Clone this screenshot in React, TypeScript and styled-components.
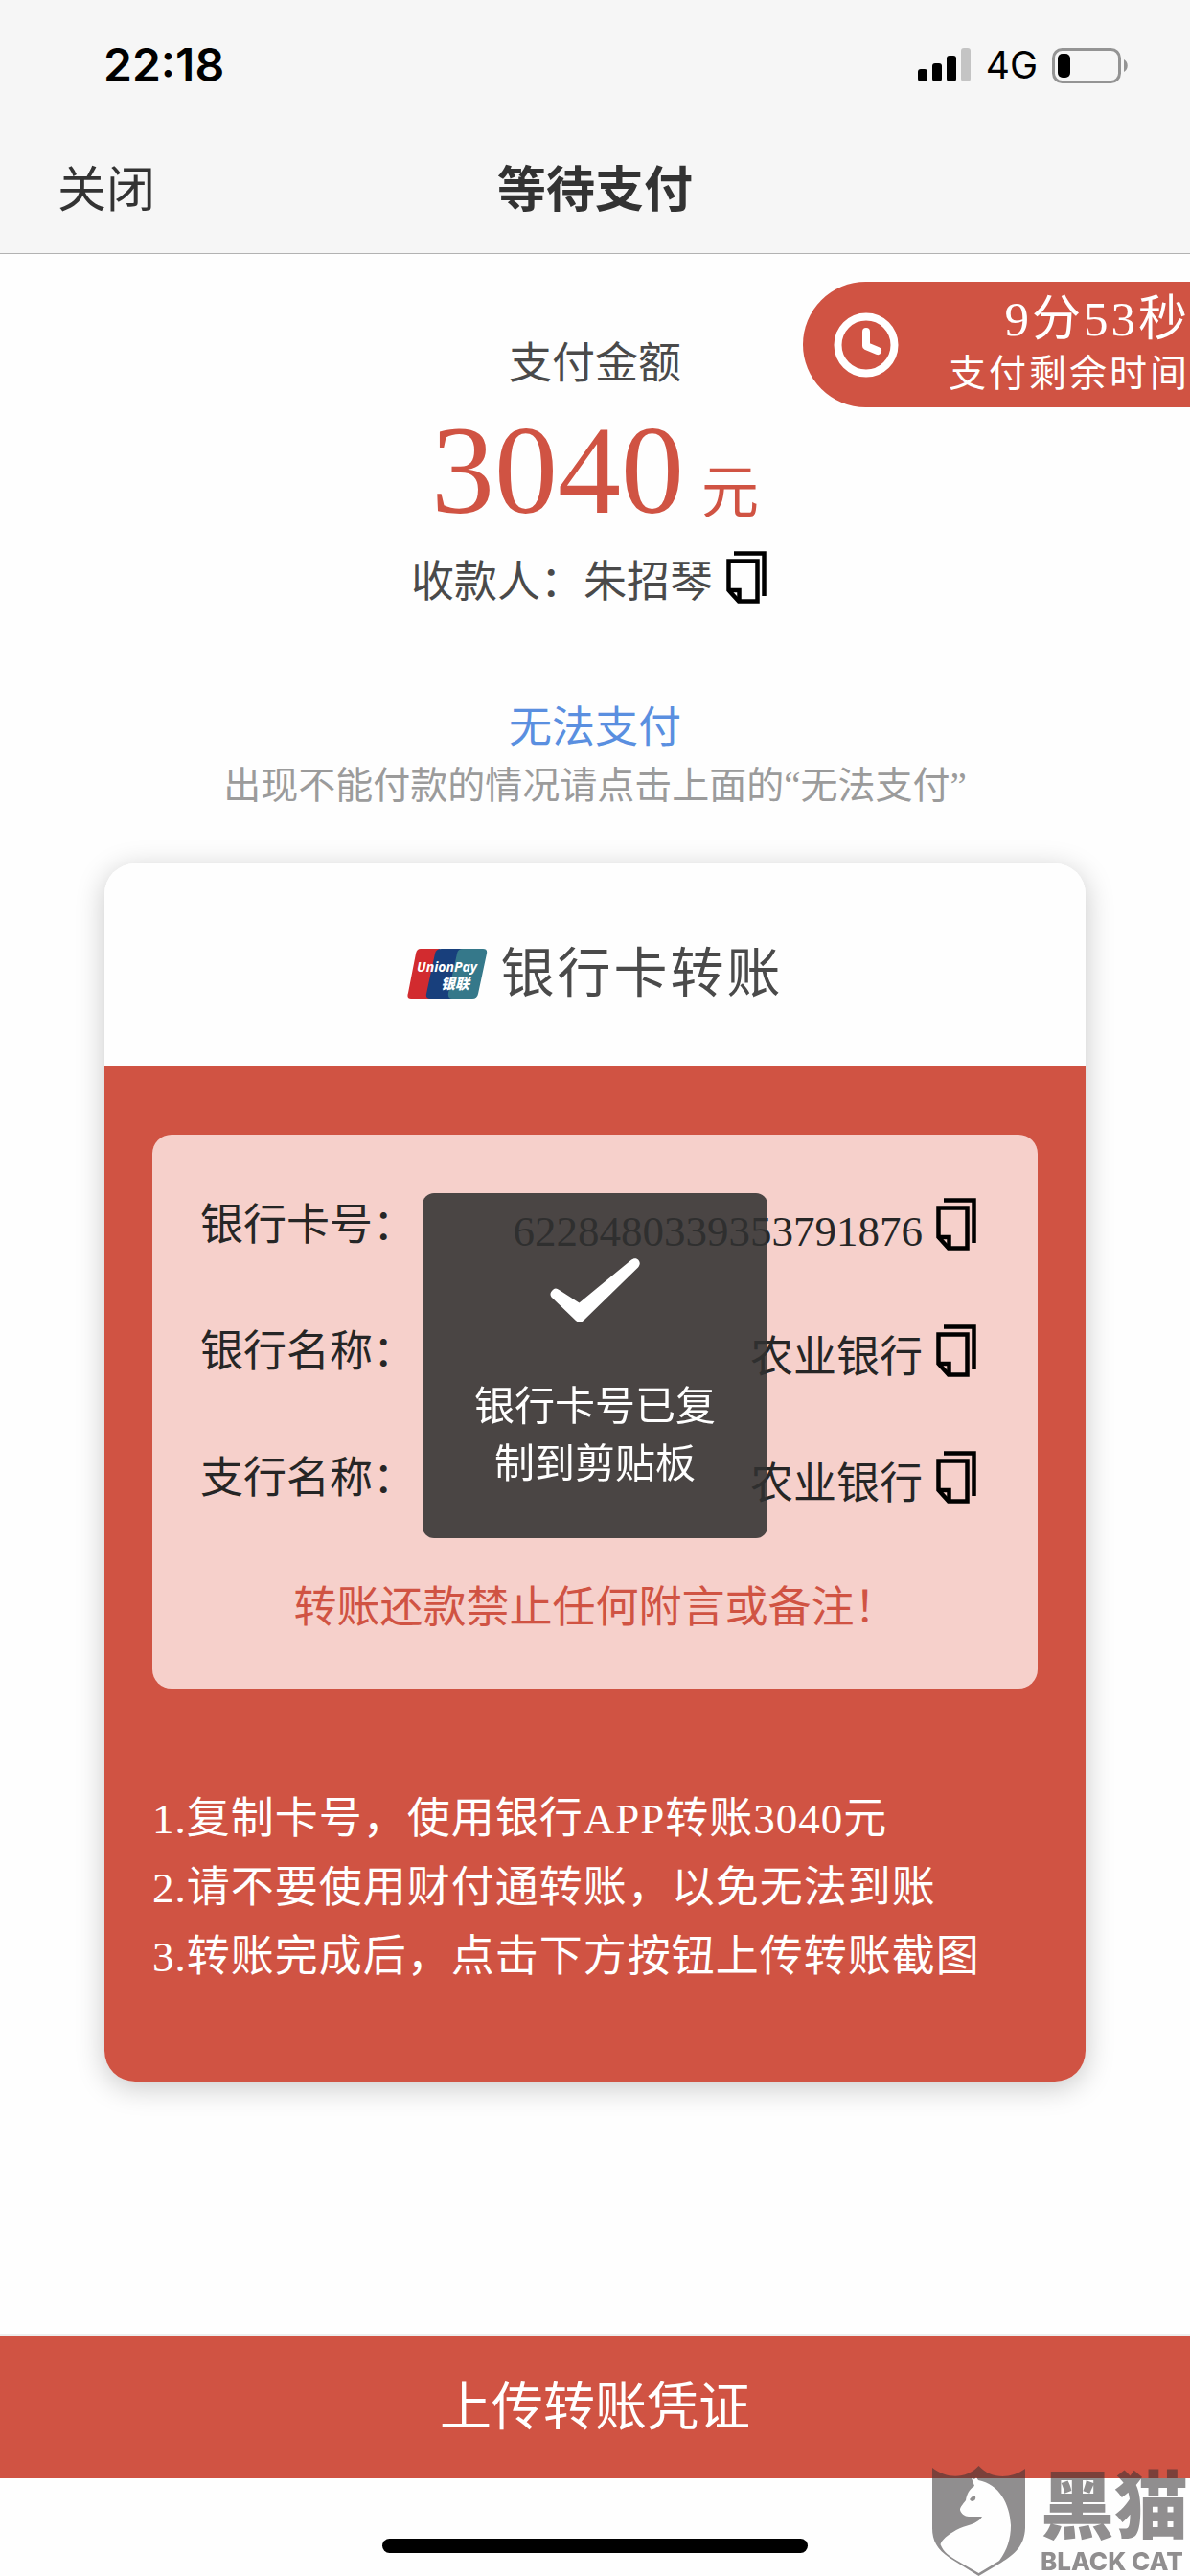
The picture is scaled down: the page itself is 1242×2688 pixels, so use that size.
import React from 'react';
import styled, { createGlobalStyle } from 'styled-components';

const red = '#d05343';
const serif = `'Liberation Serif', 'Noto Sans CJK SC', serif`;
const sans = `Inter, 'Noto Sans CJK SC', sans-serif`;

const GlobalStyle = createGlobalStyle`
  *, *::before, *::after { box-sizing: border-box; }
  body { margin: 0; background: #fefefe; font-family: ${serif}; color: #4a4a4a; }
  button { border: 0; padding: 0; background: none; font: inherit; color: inherit; cursor: pointer; }
  h1, h2, p, ol, dl, dt, dd { margin: 0; padding: 0; font-weight: 400; }
  svg { display: block; flex: none; }
`;

const Page = styled.div`
  display: flex;
  flex-direction: column;
  min-height: 100vh;
`;

const Header = styled.header`
  background: #f6f6f6;
  border-bottom: 1px solid #b2b2b2;
  font-family: ${sans};
`;

const StatusBar = styled.div`
  display: flex;
  align-items: center;
  justify-content: space-between;
  height: 132px;
  padding: 4px 64px 0 108px;
  color: #000;
`;

const Clock = styled.time`
  font-size: 48px;
  font-weight: 600;
  line-height: 60px;
`;

const StatusIcons = styled.div`
  display: flex;
  align-items: center;
  gap: 15px;
`;

const Network = styled.span`
  font-size: 39px;
  line-height: 48px;
`;

const NavBar = styled.nav`
  display: grid;
  grid-template-columns: 1fr auto 1fr;
  align-items: center;
  height: 132px;
  padding: 0 60px;
  color: #333;
  font-size: 51px;
  line-height: 72px;
`;

const CloseButton = styled.button`
  justify-self: start;
`;

const Title = styled.h1`
  font-size: 51px;
  && { font-weight: 700; }
`;

const Main = styled.main`
  position: relative;
  flex: 1;
  display: flex;
  flex-direction: column;
  align-items: center;
  padding-top: 82px;
`;

const Countdown = styled.div`
  position: absolute;
  top: 29px;
  right: 0;
  display: flex;
  align-items: center;
  justify-content: space-between;
  width: 404px;
  height: 131px;
  padding-left: 32px;
  border-radius: 66px 0 0 66px;
  background: ${red};
  color: #fff;
  text-align: right;
  letter-spacing: 3px;
`;

const TimeLeft = styled.p`
  font-size: 51px;
  line-height: 60px;
`;

const TimeLabel = styled.p`
  font-size: 39px;
  line-height: 54px;
`;

const Caption = styled.p`
  font-size: 45px;
  line-height: 66px;
`;

const Payee = styled.div`
  display: flex;
  align-items: center;
  gap: 14px;
  height: 66px;
  padding-right: 12px;
`;

const PayeeName = styled.p`
  && { padding-top: 12px; }
  font-size: 45px;
  line-height: 54px;
`;

const Amount = styled.p`
  display: flex;
  align-items: baseline;
  gap: 18px;
  color: ${red};
  font-size: 132px;
  line-height: 156px;
`;

const Unit = styled.span`
  font-size: 60px;
  line-height: 72px;
`;

const CannotPay = styled.button`
  && { color: #5a8fe0; font-size: 45px; line-height: 66px; }
  margin-top: 92px;
`;

const Tip = styled.p`
  color: #9b9b9b;
  font-size: 39px;
  line-height: 54px;
`;

const Card = styled.section`
  align-self: stretch;
  margin: 54px 109px 96px;
  border-radius: 32px;
  overflow: hidden;
  box-shadow: 0 6px 30px rgba(0, 0, 0, 0.22);
`;

const CardHeader = styled.div`
  display: flex;
  align-items: center;
  justify-content: center;
  gap: 14px;
  height: 211px;
  padding-top: 18px;
  background: #fefefe;
`;

const CardTitle = styled.h2`
  font-size: 56px;
  line-height: 72px;
  letter-spacing: 3px;
`;

const CardBody = styled.div`
  padding: 72px 50px 94px;
  background: ${red};
`;

const Panel = styled.div`
  padding: 60px 63px 51px 50px;
  border-radius: 20px;
  background: #f6d0cb;
  color: #262626;
  font-size: 45px;
  line-height: 66px;
`;

const Details = styled.dl`
  display: flex;
  flex-direction: column;
  gap: 66px;
`;

const Row = styled.div`
  display: flex;
  align-items: center;
  justify-content: space-between;
  height: 66px;
`;

const Label = styled.dt`
  && { padding-top: 4px; }
`;

const Value = styled.dd`
  display: flex;
  align-items: center;
  gap: 14px;
`;

const ValueText = styled.span`
  padding-top: 16px;
`;

const Warning = styled.p`
  && { margin-top: 71px; }
  color: ${red};
  text-align: center;
  text-indent: 14px;
`;

const Steps = styled.ol`
  && { margin-top: 100px; }
  list-style: none;
  color: #fff;
  font-size: 45px;
  line-height: 72px;
  letter-spacing: 1px;
`;

const Footer = styled.footer`
  display: flex;
  flex-direction: column;
  align-items: center;
`;

const UploadButton = styled.button`
  && {
    width: 100%;
    height: 151px;
    padding-top: 2px;
    border-top: 3px solid #eee;
    background: ${red};
    color: #fff;
    font-size: 54px;
    line-height: 72px;
  }
`;

const HomeIndicator = styled.div`
  width: 444px;
  height: 15px;
  margin: 63px 0 24px;
  border-radius: 8px;
  background: #000;
`;

const Toast = styled.div`
  position: fixed;
  top: 1245px;
  left: 50%;
  display: flex;
  flex-direction: column;
  align-items: center;
  width: 360px;
  height: 360px;
  margin-left: -180px;
  padding: 68px 48px 0;
  border-radius: 12px;
  background: rgba(48, 48, 48, 0.87);
  color: #fff;
  font-size: 42px;
  line-height: 60px;
  text-align: center;
`;

const ToastText = styled.p`
  && { margin-top: 57px; }
`;

const Watermark = styled.div`
  position: fixed;
  right: 0;
  bottom: 0;
  display: flex;
  gap: 16px;
  height: 115px;
  opacity: 0.55;
  color: #353234;
  pointer-events: none;
`;

const WatermarkText = styled.div`
  display: flex;
  flex-direction: column;
  justify-content: flex-end;
  gap: 12px;
  width: 156px;
  padding-bottom: 2px;
`;

const WatermarkName = styled.span`
  font-family: 'Noto Sans CJK SC', sans-serif;
  font-size: 77px;
  font-weight: 900;
  line-height: 76px;
`;

const WatermarkLatin = styled.span`
  font-family: Inter, sans-serif;
  font-size: 26px;
  font-weight: 800;
  line-height: 26px;
  white-space: nowrap;
`;

const SignalIcon = () => (
  <svg width="56" height="36" viewBox="0 0 56 36" aria-hidden="true">
    <rect x="0" y="22" width="10" height="13" rx="3" />
    <rect x="15" y="16" width="10" height="19" rx="3" />
    <rect x="30" y="8" width="10" height="27" rx="3" />
    <rect x="45" y="0" width="10" height="35" rx="3" fill="#c4c4c4" />
  </svg>
);

const BatteryIcon = () => (
  <svg width="80" height="37" viewBox="0 0 80 37" aria-hidden="true">
    <rect x="1.5" y="1.5" width="69" height="34" rx="9" fill="none" stroke="#949494" strokeWidth="3" />
    <rect x="6" y="6" width="13" height="25" rx="5" />
    <path d="M75 12c5 2.500 5 10.500 0 13z" fill="#949494" />
  </svg>
);

const ClockIcon = () => (
  <svg width="68" height="68" viewBox="0 0 68 68" fill="none" stroke="#fff" strokeWidth="8" strokeLinecap="round" strokeLinejoin="round" aria-hidden="true">
    <circle cx="34" cy="34" r="29.500" />
    <path d="M34 20v15l12 5" />
  </svg>
);

const CopyIcon = () => (
  <svg width="43" height="55" viewBox="0 0 43 55" fill="none" stroke="#000" strokeWidth="4.5" aria-hidden="true">
    <path d="M8 2.500h31.500V47" />
    <path d="M2.500 10.500H32.500V52.500H13L2.500 41z" />
    <path d="M2.500 41h11v11.500" />
  </svg>
);

const CheckIcon = () => (
  <svg width="94" height="68" viewBox="0 0 94 68" fill="#fff" aria-hidden="true">
    <path d="M1.500 40.500C-.5 37.500.5 35 3.500 32.500C5.500 31 7.500 31.500 9.500 33L30.500 46.500L84.500 2C87.500-.5 90.500-.5 92.500 2C94.500 4.500 94 7 92 9.500L35 65Q31 69 27 65z" />
  </svg>
);

const UnionPayLogo = () => (
  <svg width="84" height="52" viewBox="0 0 84 52" role="img" aria-label="UnionPay">
    <path d="M14 0H34L24 52H4Q-1 52 1 46L9 5Q10 0 14 0z" fill="#d22b2f" />
    <path d="M36 0H60L48 52H24Q19 52 20 47L29 5Q30 0 36 0z" fill="#183f7c" />
    <path d="M58 0H79Q84 0 83 5L74 47Q73 52 68 52H47Q42 52 43 46L52 5Q53 0 58 0z" fill="#35788a" />
    <text x="10" y="24" fill="#fff" fontFamily="Open Sans, sans-serif" fontSize="14" fontWeight="700" fontStyle="italic">UnionPay</text>
    <text x="35" y="42" fill="#fff" fontFamily="Noto Sans CJK SC, sans-serif" fontSize="15" fontWeight="900" fontStyle="italic">银联</text>
  </svg>
);

const ShieldCat = () => (
  <svg width="97" height="115" viewBox="0 0 97 115" fill="currentColor" aria-hidden="true">
    <path
      fillRule="evenodd"
      d="M0 2C15 14 36 14 48.500 0C61 14 82 14 97 3V65C96 84 86 92 72 101L48.500 115L18 96C5 87 0 78 0 65z
      M41 13L44 21C38 25 36 30 35 36C32 40 29 43 29 46C30 50 34 53 38 53L52 53C48 61 34 62 25 67C16 72 10 77 8.500 82C12 91 18 94 26 99L48.500 112L70 99C78 88 82 76 82 62C81 40 70 19 48 15L46 12L44 14z"
    />
    <path d="M39 35q3-5 6-3q1 4-3 5q-2 0-3-2z" />
  </svg>
);

const details = [
  { label: '银行卡号：', value: '6228480339353791876' },
  { label: '银行名称：', value: '农业银行' },
  { label: '支行名称：', value: '农业银行' },
];

const steps = [
  '1.复制卡号，使用银行APP转账3040元',
  '2.请不要使用财付通转账，以免无法到账',
  '3.转账完成后，点击下方按钮上传转账截图',
];

export default function App() {
  return (
    <Page>
      <GlobalStyle />
      <Header>
        <StatusBar>
          <Clock>22:18</Clock>
          <StatusIcons>
            <SignalIcon />
            <Network>4G</Network>
            <BatteryIcon />
          </StatusIcons>
        </StatusBar>
        <NavBar>
          <CloseButton type="button">关闭</CloseButton>
          <Title>等待支付</Title>
        </NavBar>
      </Header>
      <Main>
        <Countdown>
          <ClockIcon />
          <div>
            <TimeLeft>9分53秒</TimeLeft>
            <TimeLabel>支付剩余时间</TimeLabel>
          </div>
        </Countdown>
        <Caption>支付金额</Caption>
        <Amount>
          3040<Unit>元</Unit>
        </Amount>
        <Payee>
          <PayeeName>收款人：朱招琴</PayeeName>
          <button type="button" aria-label="复制收款人">
            <CopyIcon />
          </button>
        </Payee>
        <CannotPay type="button">无法支付</CannotPay>
        <Tip>出现不能付款的情况请点击上面的“无法支付”</Tip>
        <Card>
          <CardHeader>
            <UnionPayLogo />
            <CardTitle>银行卡转账</CardTitle>
          </CardHeader>
          <CardBody>
            <Panel>
              <Details>
                {details.map(({ label, value }) => (
                  <Row key={label}>
                    <Label>{label}</Label>
                    <Value>
                      <ValueText>{value}</ValueText>
                      <button type="button" aria-label={`复制${label}`}>
                        <CopyIcon />
                      </button>
                    </Value>
                  </Row>
                ))}
              </Details>
              <Warning>转账还款禁止任何附言或备注！</Warning>
            </Panel>
            <Steps>
              {steps.map((step) => (
                <li key={step}>{step}</li>
              ))}
            </Steps>
          </CardBody>
        </Card>
      </Main>
      <Footer>
        <UploadButton type="button">上传转账凭证</UploadButton>
        <HomeIndicator />
      </Footer>
      <Toast role="status">
        <CheckIcon />
        <ToastText>银行卡号已复制到剪贴板</ToastText>
      </Toast>
      <Watermark>
        <ShieldCat />
        <WatermarkText>
          <WatermarkName>黑猫</WatermarkName>
          <WatermarkLatin>BLACK CAT</WatermarkLatin>
        </WatermarkText>
      </Watermark>
    </Page>
  );
}
